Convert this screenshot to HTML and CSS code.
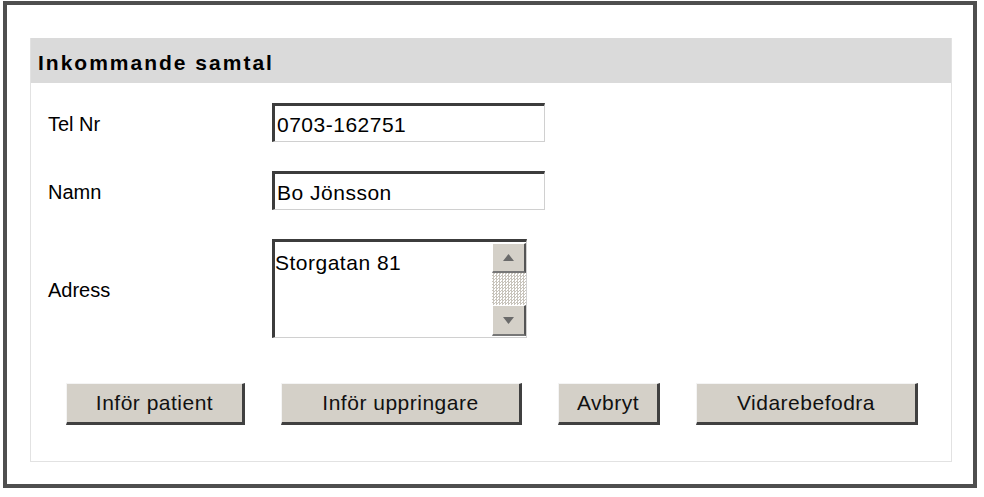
FILE: index.html
```html
<!DOCTYPE html>
<html lang="sv">

<head>
    <meta charset="UTF-8">
    <meta name="viewport" content="width=device-width, initial-scale=1.0">
    <title>Inkommande samtal</title>
    <link rel="stylesheet" href="styles.css">
</head>

<body>
    <div class="ram">
        <div class="panel">
            <h1 class="rubrik">Inkommande samtal</h1>
            <div class="formular">
                <label for="telnr" class="etikett">Tel Nr</label>
                <input type="text" id="telnr" class="falt" value="0703-162751">

                <label for="namn" class="etikett">Namn</label>
                <input type="text" id="namn" class="falt" value="Bo Jönsson">

                <label for="adress" class="etikett">Adress</label>
                <div class="textruta">
                    <textarea id="adress" class="adress">Storgatan 81</textarea>
                    <div class="rullning">
                        <div class="pil">
                            <svg width="11" height="7" viewBox="0 0 11 7"><polygon points="5.5,0 11,7 0,7" fill="#6a6a6a"/></svg>
                        </div>
                        <div class="spar"></div>
                        <div class="pil">
                            <svg width="11" height="7" viewBox="0 0 11 7"><polygon points="0,0 11,0 5.5,7" fill="#6a6a6a"/></svg>
                        </div>
                    </div>
                </div>
            </div>
            <div class="knappar">
                <input type="button" value="Inför patient" class="knapp bred1">
                <input type="button" value="Inför uppringare" class="knapp bred2">
                <input type="button" value="Avbryt" class="knapp bred3">
                <input type="button" value="Vidarebefodra" class="knapp bred4">
            </div>
        </div>
    </div>
</body>

</html>
```

FILE: styles.css
```css
body {
    background-color: white;
    font-family: "Liberation Sans", Arial, sans-serif;
    margin: 0;
}

.ram {
    border: 4px solid #4f4f4f;
    box-sizing: border-box;
    height: 487px;
    margin: 1px 0 0 3px;
    padding: 33px 0 0 23px;
    width: 974px;
}

.panel {
    border: 1px solid #e2e2e2;
    border-top: none;
    box-sizing: border-box;
    height: 424px;
    width: 922px;
}

.rubrik {
    background-color: #dadada;
    font-size: 21px;
    font-weight: bold;
    height: 45px;
    letter-spacing: 2px;
    line-height: 41px;
    margin: 0;
    padding: 4px 0 0 7px;
    box-sizing: border-box;
}

.formular {
    display: grid;
    grid-template-columns: 224px auto;
    padding: 20px 0 0 17px;
    row-gap: 29px;
}

.etikett {
    align-self: center;
    font-size: 20px;
    padding-top: 4px;
}

.falt {
    border-top: 3px solid #3c3c3c;
    border-left: 3px solid #3c3c3c;
    border-right: 1px solid #d0d0d0;
    border-bottom: 1px solid #d0d0d0;
    box-sizing: border-box;
    color: black;
    font-family: "Liberation Sans", Arial, sans-serif;
    font-size: 21px;
    height: 39px;
    letter-spacing: 0.5px;
    margin: 0;
    padding: 2px 0 0 2px;
    width: 273px;
}

.textruta {
    border-top: 3px solid #3c3c3c;
    border-left: 3px solid #3c3c3c;
    border-right: 1px solid #d0d0d0;
    border-bottom: 1px solid #d0d0d0;
    box-sizing: border-box;
    display: flex;
    height: 99px;
    width: 255px;
}

.adress {
    border: none;
    color: black;
    flex: 1;
    font-family: "Liberation Sans", Arial, sans-serif;
    font-size: 21px;
    letter-spacing: 0.5px;
    margin: 0;
    overflow: hidden;
    padding: 9px 0 0 0;
    resize: none;
}

.rullning {
    display: flex;
    flex-direction: column;
    margin: 1px 0;
    width: 34px;
}

.pil {
    align-items: center;
    background-color: #d4d0c8;
    border-top: 1px solid white;
    border-left: 1px solid white;
    border-right: 2px solid #555;
    border-bottom: 2px solid #777;
    box-sizing: border-box;
    display: flex;
    height: 30px;
    justify-content: center;
}

.pil:last-child {
    height: 31px;
}

.spar {
    background-color: #eeece8;
    background-image: repeating-conic-gradient(#c8c4bc 0 25%, #ffffff 0 50%);
    background-size: 3px 3px;
    height: 32px;
}

.knappar {
    display: flex;
    gap: 36px;
    margin-top: 45px;
    padding-left: 35px;
}

.knapp {
    background-color: #d4d0c8;
    border-top: 1px solid #f4f4f4;
    border-left: 1px solid #f4f4f4;
    border-right: 3px solid #404040;
    border-bottom: 3px solid #404040;
    box-sizing: border-box;
    color: #111;
    font-family: "Liberation Sans", Arial, sans-serif;
    font-size: 21px;
    height: 42px;
    letter-spacing: 0.5px;
    margin: 0;
    padding: 0;
}

.bred1 { width: 179px; }
.bred2 { width: 241px; }
.bred3 { width: 102px; }
.bred4 { width: 222px; }
```
